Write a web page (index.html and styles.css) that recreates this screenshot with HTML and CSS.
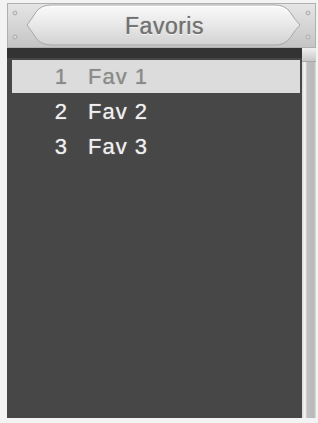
FILE: index.html
```html
<!DOCTYPE html>
<html lang="fr">
  <head>
    <meta charset="UTF-8" />
    <title>Favoris</title>
    <link rel="stylesheet" href="styles.css">
  </head>
  <body>
    <div class="screen">
      <div class="header">
        <svg class="header-art" width="309" height="45" viewBox="0 0 309 45">
          <defs>
            <linearGradient id="frame" x1="0" y1="0" x2="0" y2="1">
              <stop offset="0" stop-color="#e6e6e6" />
              <stop offset="1" stop-color="#c4c4c4" />
            </linearGradient>
            <linearGradient id="pill" x1="0" y1="0" x2="0" y2="1">
              <stop offset="0" stop-color="#fafafa" />
              <stop offset="0.5" stop-color="#e8e8e8" />
              <stop offset="1" stop-color="#d2d2d2" />
            </linearGradient>
          </defs>
          <rect x="0" y="0" width="309" height="45" fill="url(#frame)" />
          <rect x="0.5" y="0.5" width="308" height="44" fill="none" stroke="#b0b0b0" />
          <!-- pill -->
          <path d="M44 2 L268 2 Q278 2 283 9 Q288 17 293 22 Q288 27 283 35 Q278 42 268 42 L44 42 Q34 42 29 35 Q24 27 20 22 Q24 17 29 9 Q34 2 44 2 Z"
                fill="url(#pill)" stroke="#a8a8a8" stroke-width="1" />
          <path d="M44 3.5 L268 3.5 Q277 3.5 281.5 10" fill="none" stroke="#ffffff" stroke-width="1.2" />
          <!-- screws -->
          <circle cx="8" cy="10" r="2" fill="#d8d8d8" stroke="#a0a0a0" stroke-width="0.8" />
          <circle cx="8" cy="34" r="2" fill="#d8d8d8" stroke="#a0a0a0" stroke-width="0.8" />
          <circle cx="301" cy="10" r="2" fill="#d8d8d8" stroke="#a0a0a0" stroke-width="0.8" />
          <circle cx="301" cy="34" r="2" fill="#d8d8d8" stroke="#a0a0a0" stroke-width="0.8" />
        </svg>
        <span class="title">Favoris</span>
      </div>

      <div class="content">
        <div class="list">
          <div class="row selected"><span class="num">1</span><span>Fav 1</span></div>
          <div class="row"><span class="num">2</span><span>Fav 2</span></div>
          <div class="row"><span class="num">3</span><span>Fav 3</span></div>
        </div>
        <div class="scrollbar">
          <div class="thumb"></div>
        </div>
      </div>
    </div>
  </body>
</html>
```

FILE: styles.css
```css
* {
  margin: 0;
  padding: 0;
  box-sizing: border-box;
}

body {
  background: #f3f3f3;
  font-family: "Liberation Sans", Arial, sans-serif;
}

.screen {
  width: 318px;
  height: 423px;
  padding: 3px 2px 5px 7px;
  display: flex;
  flex-direction: column;
}

/* 상단 타이틀 */
.header {
  position: relative;
  height: 45px;
  display: flex;
  align-items: center;
  justify-content: center;
}

.header-art {
  position: absolute;
  top: 0;
  left: 0;
}

.title {
  position: relative;
  font-size: 23px;
  letter-spacing: 0.5px;
  color: #727272;
  text-shadow: 0 0 1px #8a8a8a, 0 1px 0 #ffffff;
  padding-left: 6px;
  margin-top: 1px;
}

.content {
  flex: 1;
  display: flex;
}

.list {
  flex: 1;
  background: #474747;
  border-top: 10px solid #333333;
  padding: 2px 2px 0 5px;
}

.row {
  height: 35px;
  display: flex;
  align-items: center;
  font-size: 22px;
  letter-spacing: 1px;
  color: #f0f0f0;
  text-shadow: 0 0 1px #bbbbbb;
}

.row.selected {
  background: #dcdcdc;
  color: #8a8a8a;
  text-shadow: 0 0 1px #a0a0a0;
  height: 33px;
  margin-bottom: 1px;
}

.num {
  width: 76px;
  text-align: right;
  padding-right: 20px;
}

.scrollbar {
  width: 14px;
  background: linear-gradient(90deg, #d8d8d8 0, #f8f8f8 3px, #c0c0c0 5px, #b8b8b8 12px, #e0e0e0 14px);
  display: flex;
  flex-direction: column;
}

.thumb {
  height: 14px;
  background: linear-gradient(180deg, #f0f0f0, #c8c8c8);
  border-bottom: 1px solid #a8a8a8;
}
```
